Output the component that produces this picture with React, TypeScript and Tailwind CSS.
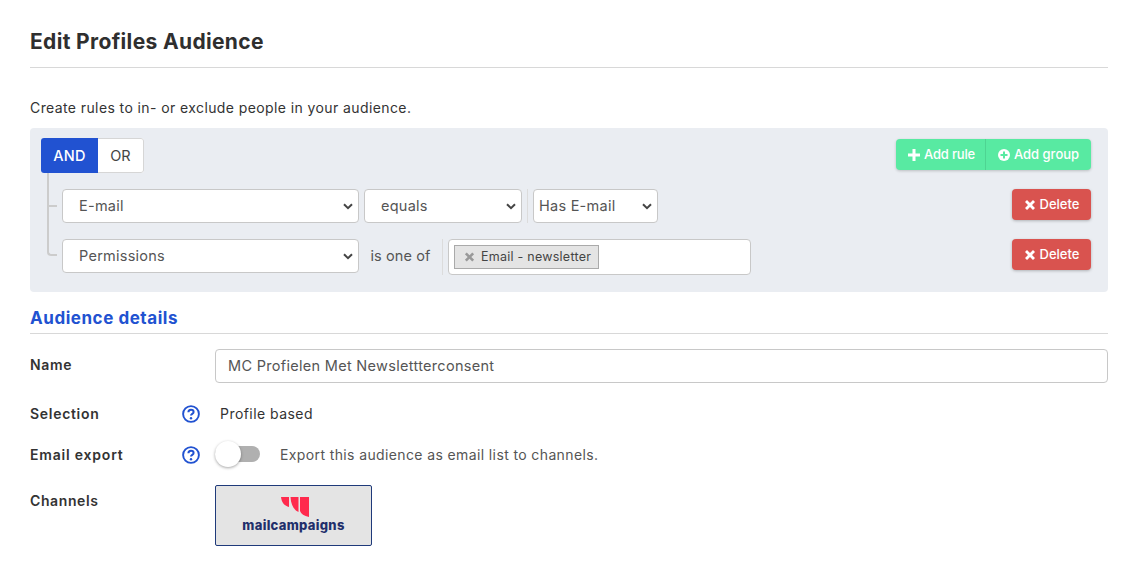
const font = "font-['Inter',sans-serif]";

function Select({ label, width, pad }: { label: string; width: string; pad: string }) {
  return (
    <div className={`flex h-[34px] items-center justify-between rounded border border-[#c8c8c8] bg-white pr-[5px] text-[14.5px] tracking-[0.25px] text-[#555] ${width} ${pad}`}>
      <span>{label}</span>
      <svg viewBox="0 0 10 7" className="h-[7px] w-[10px]" fill="none">
        <path d="M1 1.2 5 5.2 9 1.2" stroke="#444" strokeWidth="2" />
      </svg>
    </div>
  );
}

function DeleteButton() {
  return (
    <button className="flex h-[31px] w-[79px] items-center justify-center gap-1 rounded-sm bg-[#d9534f] text-[13px] font-medium text-white shadow-[0_1px_3px_rgba(0,0,0,0.25)]">
      <svg viewBox="0 0 12 12" className="h-3 w-3 fill-white">
        <path d="M1 3 3 1l3 3 3-3 2 2-3 3 3 3-2 2-3-3-3 3-2-2 3-3z" />
      </svg>
      Delete
    </button>
  );
}

function Help() {
  return (
    <svg viewBox="0 0 18 18" className="mt-[2px] h-[18px] w-[18px]" fill="none">
      <circle cx="9" cy="9" r="7.9" stroke="#2152d1" strokeWidth="1.9" />
      <path d="M6.4 7.2c0-1.6 1.1-2.5 2.6-2.5s2.6.9 2.6 2.2c0 2-2.6 1.9-2.6 3.6" stroke="#2152d1" strokeWidth="2" />
      <circle cx="9" cy="13.2" r="1.2" fill="#2152d1" />
    </svg>
  );
}

export default function App() {
  return (
    <div className={`h-[578px] w-[1134px] overflow-hidden bg-white pl-[30px] pr-[26px] pt-[28px] text-[#333] ${font}`}>
      <h1 className="border-b border-[#d8d8d8] pb-[12px] text-[21px] font-bold leading-[27px] tracking-[0.35px] text-[#2f2f2f]">
        Edit Profiles Audience
      </h1>
      <p className="mt-[30px] text-[14px] leading-[20px] tracking-[0.4px]">Create rules to in- or exclude people in your audience.</p>

      <div className="mt-[10px] h-[164px] rounded-sm bg-[#eaedf2] pl-[11px] pr-[17px] pt-[10px]">
        <div className="flex items-start justify-between">
          <div className="flex h-[35px] w-[103px] overflow-hidden rounded-[3px] bg-white text-[14.5px]">
            <div className="flex w-[57px] items-center justify-center bg-[#2152d1] font-medium tracking-[0.3px] text-white">AND</div>
            <div className="flex flex-1 items-center justify-center rounded-r-[3px] border border-l-0 border-[#d6d6d6] text-[#444]">OR</div>
          </div>
          <div className="mt-px flex h-[31px] w-[195px] rounded-sm bg-[#58eaa2] text-[13px] font-medium text-white shadow-[0_1px_3px_rgba(0,0,0,0.2)]">
            <div className="flex w-[90px] items-center justify-center gap-1 border-r border-[#4ed492] pl-[2px] tracking-[-0.2px]">
              <svg viewBox="0 0 12 12" className="h-3 w-3 fill-white">
                <path d="M4.5 0h3v4.5H12v3H7.5V12h-3V7.5H0v-3h4.5z" />
              </svg>
              Add rule
            </div>
            <div className="flex flex-1 items-center justify-center gap-1">
              <svg viewBox="0 0 12 12" className="h-3 w-3">
                <circle cx="6" cy="6" r="6" fill="#fff" />
                <path d="M5 2.5h2V5h2.5v2H7v2.5H5V7H2.5V5H5z" fill="#58eaa2" />
              </svg>
              Add group
            </div>
          </div>
        </div>

        <div className="relative mt-[16px] flex flex-col gap-[16px] pl-[21px]">
          <div className="absolute left-[6px] top-[-16px] h-[83px] w-[10px] rounded-bl border-b-2 border-l-2 border-[#cccccc]" />
          <div className="absolute left-[6px] top-[16px] h-[2px] w-[10px] bg-[#cccccc]" />
          <div className="flex items-start justify-between">
            <div className="flex items-center">
              <Select label="E-mail" width="w-[297px]" pad="pl-[16px]" />
              <div className="ml-[5px]"><Select label="equals" width="w-[158px]" pad="pl-[16px]" /></div>
              <div className="mx-[5px] h-[34px] w-px bg-[#dcdcdc]" />
              <Select label="Has E-mail" width="w-[125px]" pad="pl-[5px]" />
            </div>
            <DeleteButton />
          </div>
          <div className="flex items-start justify-between">
            <div className="flex items-start">
              <Select label="Permissions" width="w-[297px]" pad="pl-[16px]" />
              <div className="flex h-[34px] w-[83px] items-center justify-center text-[14.5px] tracking-[0.1px] text-[#555]">is one of</div>
              <div className="mr-[5px] h-[36px] w-px bg-[#dcdcdc]" />
              <div className="flex h-[36px] w-[303px] items-center rounded border border-[#c8c8c8] bg-white pl-[5px]">
                <div className="flex h-[24px] items-center gap-[6px] border border-[#aaa] bg-[#e4e4e4] pl-[9px] pr-[7px] text-[12.5px] tracking-[0.25px] text-[#444]">
                  <svg viewBox="0 0 12 12" className="h-[12px] w-[11px] fill-[#999]">
                    <path d="M1 3 3 1l3 3 3-3 2 2-3 3 3 3-2 2-3-3-3 3-2-2 3-3z" />
                  </svg>
                  Email - newsletter
                </div>
              </div>
            </div>
            <DeleteButton />
          </div>
        </div>
      </div>

      <h2 className="mt-[15px] border-b border-[#d8d8d8] pb-[4px] text-[17px] font-bold leading-[22px] tracking-[0.55px] text-[#2152d1]">
        Audience details
      </h2>

      <div className="mt-[15px] flex items-center text-[14px]">
        <div className="mb-[4px] w-[185px] font-semibold tracking-[0.7px]">Name</div>
        <div className="flex h-[34px] flex-1 items-center rounded border border-[#c8c8c8] pl-[12px] text-[14.5px] tracking-[0.3px] text-[#555]">
          MC Profielen Met Newslettterconsent
        </div>
      </div>

      <div className="mt-[20px] flex h-[20px] items-center text-[14px]">
        <div className="w-[152px] font-semibold tracking-[0.7px]">Selection</div>
        <Help />
        <div className="ml-[20px] tracking-[0.45px]">Profile based</div>
      </div>

      <div className="mt-[20px] flex h-[22px] items-center text-[14px]">
        <div className="w-[152px] font-semibold tracking-[0.8px]">Email export</div>
        <Help />
        <div className="relative ml-[15px] h-[16px] w-[45px] rounded-full bg-[#b0b0b0]">
          <div className="absolute left-0 top-[-5px] h-[26px] w-[26px] rounded-full bg-white shadow-[0_1px_3px_rgba(0,0,0,0.35)]" />
        </div>
        <div className="ml-[20px] tracking-[0.38px] text-[#555]">Export this audience as email list to channels.</div>
      </div>

      <div className="mt-[20px] flex items-start text-[14px]">
        <div className="mt-[5px] w-[185px] font-semibold tracking-[0.6px]">Channels</div>
        <div className="flex h-[61px] w-[157px] flex-col items-center rounded-[2px] border border-[#1f3a7a] bg-[#e4e4e4] pt-[11px]">
          <svg viewBox="0 0 28 20" className="ml-[2px] h-[20px] w-[28px]">
            <path d="M0 0h8v10C4 9 .6 6 0 0zM9.500 0h8v15C13 13 9.900 8 9.500 0zM19 0h9v20c-5-1-8-3-9-6z" fill="#ff2a4d" />
          </svg>
          <div className="text-[13px] font-extrabold leading-[17px] tracking-[0.3px] text-[#1f2f6b]">mailcampaigns</div>
        </div>
      </div>
    </div>
  );
}
